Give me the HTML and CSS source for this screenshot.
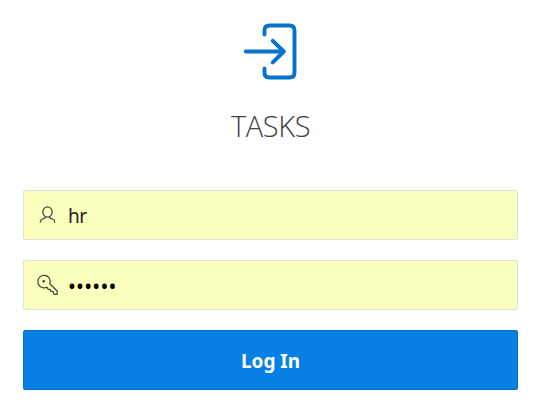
FILE: index.html
```html
<!DOCTYPE html>
<html lang="en">
<head>
<meta charset="utf-8">
<title>Tasks</title>
<link rel="stylesheet" href="styles.css">
</head>
<body>
<main class="login">
  <svg class="logo" viewBox="0 0 60 60" aria-hidden="true">
    <path d="M23.5 12.5V8.5q0-5 5-5h20q5 0 5 5v42q0 5-5 5h-20q-5 0-5-5v-4M4.8 29.5h38M31.8 18.8l11 10.7-11 10.9"/>
  </svg>
  <h1 class="title">TASKS</h1>
  <form class="form">
    <label class="field">
      <svg class="icon" viewBox="0 0 22 22" aria-hidden="true">
        <ellipse cx="10.5" cy="8" rx="4.7" ry="5.2"/>
        <path d="M8 12.5V14L5 15.3q-1.7.8-1.8 3.5M13 12.5V14l3 1.3q1.7.8 1.8 3.5"/>
      </svg>
      <input class="input" type="text" value="hr" aria-label="Username">
    </label>
    <label class="field">
      <svg class="icon" viewBox="0 0 22 22" aria-hidden="true">
        <path d="M12.8 9.8A6.2 6.2 0 1 0 8.4 13.6L10.2 13.4 11 15.2 13.1 15.3 13.7 17.3 15.8 17.4 17.2 20.3H20.2V17.1Z"/>
        <circle class="dot" cx="6.7" cy="7.3" r="1.3"/>
      </svg>
      <span class="password">••••••</span>
    </label>
    <button class="submit" type="button">Log In</button>
  </form>
</main>
</body>
</html>
```
FILE: styles.css
```css
* { box-sizing: border-box; }
body {
  margin: 0;
  background: #fff;
  color: #202020;
  font-family: "Noto Sans", "Open Sans", sans-serif;
}
.login {
  display: flex;
  flex-direction: column;
  align-items: center;
  width: 541px;
  padding: 22px 23px 0;
}
.logo {
  width: 60px;
  height: 60px;
  fill: none;
  stroke: #0572ce;
  stroke-width: 3.9;
  stroke-linecap: round;
  stroke-linejoin: round;
}
.title {
  margin: 24px 0 44px;
  font: 300 29px/40px "Open Sans", sans-serif;
  letter-spacing: -0.4px;
  color: #404040;
}
.form {
  display: grid;
  gap: 20px;
  width: 495px;
}
.field {
  display: flex;
  align-items: center;
  height: 50px;
  padding-left: 13px;
  border: 1px solid #dfdfdf;
  border-radius: 2px;
  background: #faffbd;
}
.icon {
  width: 22px;
  height: 22px;
  fill: none;
  stroke: #454541;
  stroke-width: 1.25;
}
.icon .dot { fill: #454541; stroke: none; }
.input {
  width: 400px;
  margin-left: 9px;
  padding: 2px 0 0;
  border: 0;
  background: transparent;
  color: #202020;
  font: 19px/28px "Noto Sans", sans-serif;
  letter-spacing: -0.4px;
}
.password {
  margin-left: 9px;
  padding-top: 2px;
  color: #000;
  font: 21px/28px "Noto Sans", sans-serif;
  letter-spacing: 0.2px;
}
.submit {
  height: 60px;
  padding: 2px 0 0;
  border: 1px solid #0471cc;
  border-radius: 2px;
  background: #0780e6;
  box-shadow: 0 2px 2px -1px #0002;
  color: #fff;
  font: 700 19px/28px "Noto Sans", sans-serif;
}
```
